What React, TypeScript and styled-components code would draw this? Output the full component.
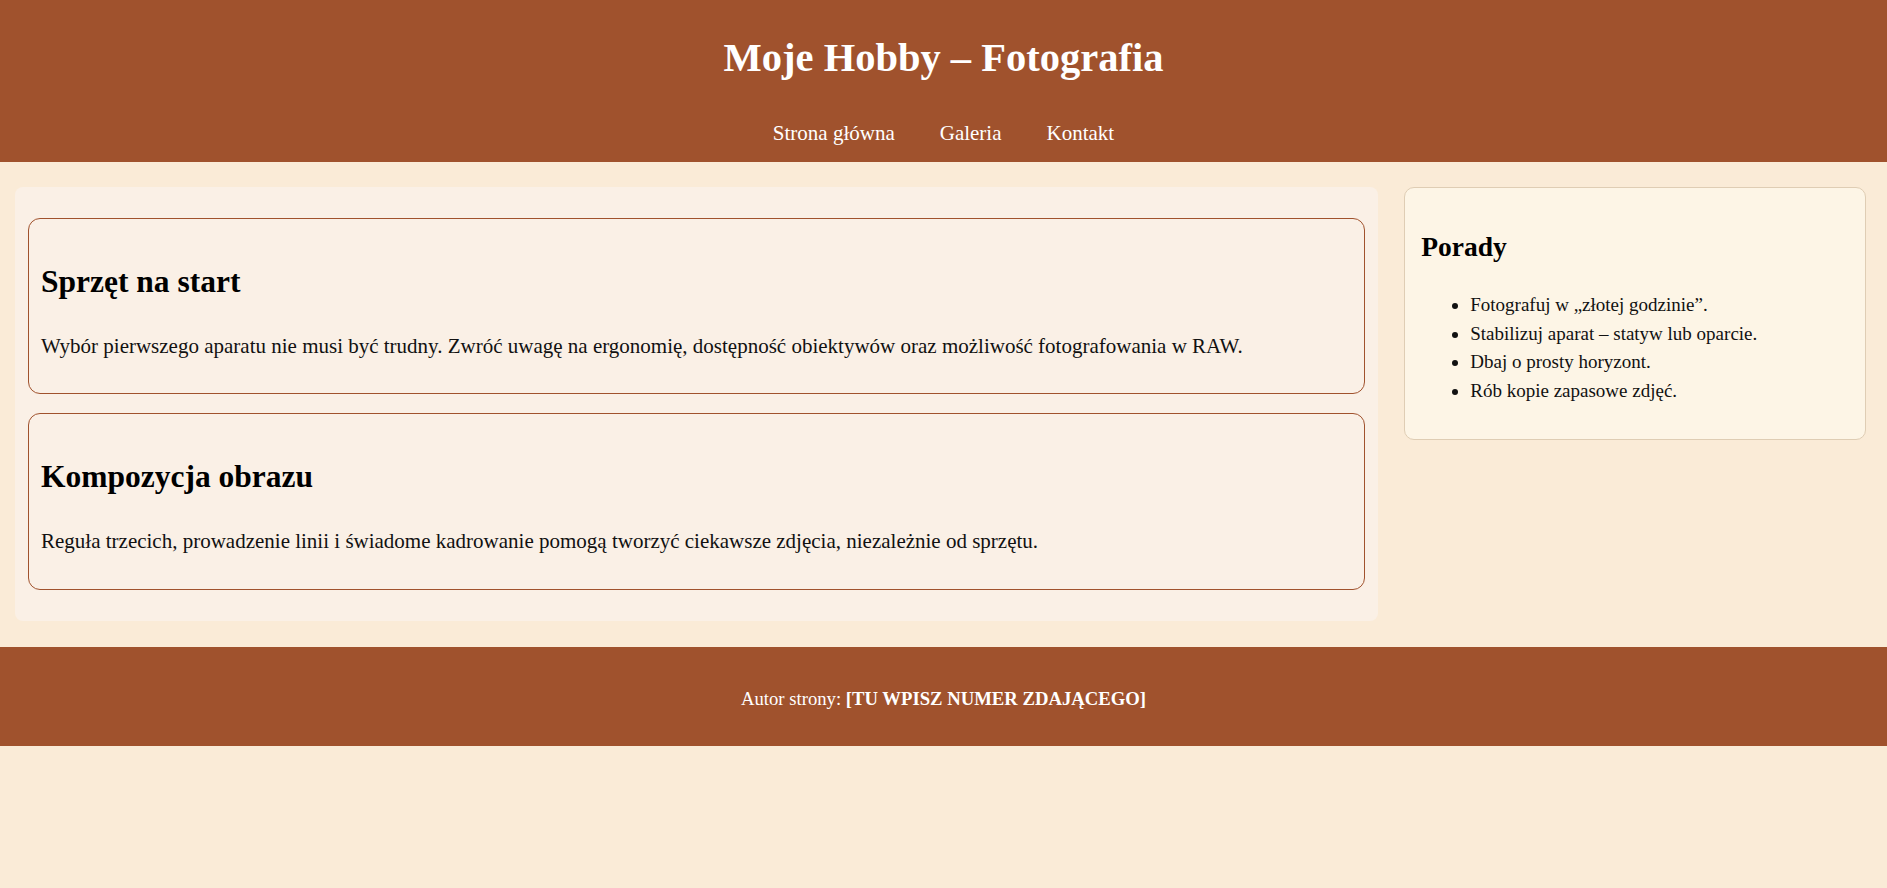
import React from "react";
import styled, { createGlobalStyle } from "styled-components";

const Global = createGlobalStyle`
  html, body {
    margin: 0;
    padding: 0;
    background: #faebd7;
  }
  body {
    font-family: "Liberation Serif", "Times New Roman", serif;
    color: #111;
    line-height: 28.8px;
  }
  * { box-sizing: border-box; }
`;

const Header = styled.header`
  background: #a0522d;
  color: #fff;
  display: flex;
  flex-direction: column;
  align-items: center;
  padding: 34px 0 14px;
`;

const Title = styled.h1`
  margin: 0;
  font-size: 40.5px;
  line-height: 48px;
  font-weight: 700;
`;

const Nav = styled.nav`
  display: flex;
  gap: 45px;
  margin-top: 37px;
`;

const NavLink = styled.a`
  color: #fff;
  text-decoration: none;
  font-size: 21px;
  line-height: 28.8px;
`;

const Main = styled.main`
  display: grid;
  grid-template-columns: 1364fr 462fr;
  gap: 26px;
  align-items: start;
  padding: 25px 21px 26px 15px;
`;

const Content = styled.section`
  background: #faf0e6;
  border-radius: 8px;
  padding: 31px 13px;
  display: flex;
  flex-direction: column;
  gap: 19px;
`;

const Card = styled.article`
  background: #faf0e6;
  border: 1px solid #a0522d;
  border-radius: 12px;
  padding: 44px 12px 33px;
`;

const CardTitle = styled.h2`
  margin: 0 0 31px;
  font-size: 31.5px;
  line-height: 37.8px;
  font-weight: 700;
  color: #000;
`;

const CardText = styled.p`
  margin: 0;
  font-size: 21px;
  line-height: 28.8px;
`;

const Aside = styled.aside`
  background: #fdf5e6;
  border: 1px solid #dfcdb4;
  border-radius: 10px;
  padding: 42px 16px 33px;
`;

const AsideTitle = styled.h3`
  margin: 0 0 28px;
  font-size: 27.5px;
  line-height: 33px;
  font-weight: 700;
  color: #000;
`;

const Tips = styled.ul`
  margin: 0;
  padding-left: 49px;
`;

const Tip = styled.li`
  font-size: 19px;
  line-height: 28.8px;
`;

const Footer = styled.footer`
  background: #a0522d;
  color: #fff;
  text-align: center;
  padding: 38px 0 32px;
  font-size: 18.7px;
  line-height: 28.8px;
`;

const articles = [
  {
    title: "Sprzęt na start",
    text: "Wybór pierwszego aparatu nie musi być trudny. Zwróć uwagę na ergonomię, dostępność obiektywów oraz możliwość fotografowania w RAW.",
  },
  {
    title: "Kompozycja obrazu",
    text: "Reguła trzecich, prowadzenie linii i świadome kadrowanie pomogą tworzyć ciekawsze zdjęcia, niezależnie od sprzętu.",
  },
];

const tips = [
  "Fotografuj w „złotej godzinie”.",
  "Stabilizuj aparat – statyw lub oparcie.",
  "Dbaj o prosty horyzont.",
  "Rób kopie zapasowe zdjęć.",
];

export default function App() {
  return (
    <>
      <Global />
      <Header>
        <Title>Moje Hobby – Fotografia</Title>
        <Nav>
          <NavLink href="#">Strona główna</NavLink>
          <NavLink href="#">Galeria</NavLink>
          <NavLink href="#">Kontakt</NavLink>
        </Nav>
      </Header>
      <Main>
        <Content>
          {articles.map((a) => (
            <Card key={a.title}>
              <CardTitle>{a.title}</CardTitle>
              <CardText>{a.text}</CardText>
            </Card>
          ))}
        </Content>
        <Aside>
          <AsideTitle>Porady</AsideTitle>
          <Tips>
            {tips.map((t) => (
              <Tip key={t}>{t}</Tip>
            ))}
          </Tips>
        </Aside>
      </Main>
      <Footer>
        Autor strony: <strong>[TU WPISZ NUMER ZDAJĄCEGO]</strong>
      </Footer>
    </>
  );
}
